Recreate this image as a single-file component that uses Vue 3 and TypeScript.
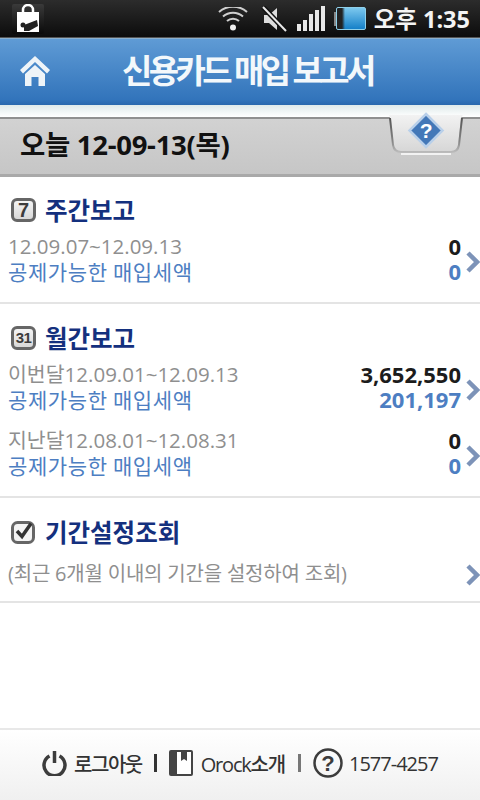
<script setup lang="ts">
interface Row { label: string; total: string; deductible: string }
const signal: number[] = [7, 11, 17, 21, 25]
const weekly: Row[] = [{ label: '12.09.07~12.09.13', total: '0', deductible: '0' }]
const monthly: Row[] = [
  { label: '이번달12.09.01~12.09.13', total: '3,652,550', deductible: '201,197' },
  { label: '지난달12.08.01~12.08.31', total: '0', deductible: '0' }
]
</script>

<template>
  <div class="screen">
    <div class="status">
      <svg class="notif" width="32" height="30" viewBox="0 0 32 30">
        <defs>
          <linearGradient id="tile" x1="0" y1="0" x2="0" y2="1">
            <stop offset="0" stop-color="#3a3a3a" />
            <stop offset="1" stop-color="#0a0a0a" />
          </linearGradient>
        </defs>
        <rect width="32" height="30" rx="2" fill="url(#tile)" />
        <path d="M11 8V6a5 5 0 0 1 10 0v2" fill="none" stroke="#fff" stroke-width="2.500" />
        <path d="M5 8h22v20H5z" fill="#fff" />
        <path d="M12 21l13-5 1 6-9 5h-5z" fill="#222" />
        <circle cx="11" cy="21" r="2.500" fill="#222" />
      </svg>
      <div class="status-right">
        <svg class="wifi" width="30" height="24" viewBox="0 0 30 24">
          <circle cx="15" cy="20.500" r="3" fill="#f0f0f0" />
          <path d="M9 14a9 9 0 0 1 12 0M5 9.500a15 15 0 0 1 20 0M1 5a21 21 0 0 1 28 0" fill="none" stroke="#cfcfcf" stroke-width="2" />
        </svg>
        <svg class="mute" width="26" height="26" viewBox="0 0 26 26">
          <path d="M3 9h5l8-7v22l-8-7H3z" fill="#ddd" />
          <path d="M2 1l23 24" stroke="#111" stroke-width="5" />
          <path d="M2 1l23 24" stroke="#e8e8e8" stroke-width="2" />
        </svg>
        <div class="bars">
          <i v-for="h in signal" :key="h" :style="{ height: h + 'px' }"></i>
        </div>
        <div class="battery"><span class="tip"></span><span class="cell"></span></div>
        <span class="clock">오후 1:35</span>
      </div>
    </div>

    <header class="titlebar">
      <svg class="home" width="32" height="32" viewBox="0 0 32 32">
        <path d="M16 1L1 15l3 3.500L16 7l12 11.500 3-3.500z" fill="#eef4f8" />
        <path d="M6 19L16 10l10 9v12h-6.500v-9h-7v9H6z" fill="#eef4f8" />
      </svg>
      <h1>신용카드 매입 보고서</h1>
    </header>

    <div class="gap"></div>

    <div class="datebar">
      <span>오늘 12-09-13(목)</span>
      <svg class="tab" width="78" height="42" viewBox="0 0 78 42">
        <defs>
          <linearGradient id="tabfill" x1="0" y1="0" x2="0" y2="1">
            <stop offset="0" stop-color="#f2f2f2" />
            <stop offset="1" stop-color="#d6d6d6" />
          </linearGradient>
          <linearGradient id="tabline" x1="0" y1="0" x2="0" y2="1">
            <stop offset="0" stop-color="#555" />
            <stop offset="0.7" stop-color="#888" />
            <stop offset="1" stop-color="#bbb" />
          </linearGradient>
        </defs>
        <path d="M2 0h74l-2 3-3 27q-1 7-8 7H13q-7 0-8-7L3 3z" fill="url(#tabfill)" />
        <path d="M3 3l3 27q1 7 8 7h50q7 0 8-7l3-27" fill="none" stroke="url(#tabline)" stroke-width="2" />
        <path d="M14 39h50" stroke="#fff" stroke-width="1.500" />
        <path d="M39 -3l16.500 16.500L39 30 22.500 13.500z" transform="translate(0 2)" fill="#4378b8" stroke="#b9d0ea" stroke-width="2.500" />
        <text x="39" y="23" text-anchor="middle" class="q">?</text>
      </svg>
    </div>

    <main class="content">
      <section class="block weekly">
        <h2>
          <span class="cal">7</span>
          주간보고
        </h2>
        <div v-for="r in weekly" :key="r.label" class="row">
          <div class="texts">
            <div class="range">{{ r.label }}</div>
            <div class="ded">공제가능한 매입세액</div>
          </div>
          <div class="nums">
            <div class="total">{{ r.total }}</div>
            <div class="dval">{{ r.deductible }}</div>
          </div>
          <svg class="chev" width="14" height="22" viewBox="0 0 14 22"><path d="M2 2l9 9-9 9" fill="none" stroke="#7d93b8" stroke-width="4.500" /></svg>
        </div>
      </section>

      <section class="block monthly">
        <h2>
          <span class="cal two">31</span>
          월간보고
        </h2>
        <div v-for="r in monthly" :key="r.label" class="row">
          <div class="texts">
            <div class="range">{{ r.label }}</div>
            <div class="ded">공제가능한 매입세액</div>
          </div>
          <div class="nums">
            <div class="total">{{ r.total }}</div>
            <div class="dval">{{ r.deductible }}</div>
          </div>
          <svg class="chev" width="14" height="22" viewBox="0 0 14 22"><path d="M2 2l9 9-9 9" fill="none" stroke="#7d93b8" stroke-width="4.500" /></svg>
        </div>
      </section>

      <section class="block period">
        <h2>
          <svg class="check" width="25" height="24" viewBox="0 0 25 24">
            <rect x="1.500" y="2.500" width="21" height="20" rx="5" fill="#f4f4f4" stroke="#666" stroke-width="3" />
            <path d="M6 11l5 5.500 9-13" fill="none" stroke="#333" stroke-width="3.500" />
          </svg>
          기간설정조회
        </h2>
        <div class="row note-row">
          <div class="note">(최근 6개월 이내의 기간을 설정하여 조회)</div>
          <svg class="chev" width="14" height="22" viewBox="0 0 14 22"><path d="M2 2l9 9-9 9" fill="none" stroke="#7d93b8" stroke-width="4.500" /></svg>
        </div>
      </section>
    </main>

    <footer class="foot">
      <svg width="25" height="26" viewBox="0 0 25 26">
        <path d="M7.500 6a10.500 10.500 0 1 0 10 0" fill="none" stroke="#3c3c3c" stroke-width="3.500" />
        <path d="M12.500 1v12" stroke="#3c3c3c" stroke-width="3.500" />
      </svg>
      <span class="ft ko">로그아웃</span>
      <i class="sep"></i>
      <svg class="book" width="24" height="26" viewBox="0 0 24 26">
        <rect x="0" y="0" width="24" height="26" rx="2" fill="#444" />
        <path d="M8 2h14v22H8z" fill="#fff" />
        <path d="M12 2h6v9l-3-2-3 2z" fill="#444" />
      </svg>
      <span class="ft mix">Orock소개</span>
      <i class="sep light"></i>
      <svg width="30" height="30" viewBox="0 0 30 30">
        <circle cx="15" cy="15" r="13.500" fill="none" stroke="#3c3c3c" stroke-width="2.500" />
        <text x="15" y="22.500" text-anchor="middle" class="fq">?</text>
      </svg>
      <span class="ft num">1577-4257</span>
    </footer>
  </div>
</template>

<style>
html, body { margin: 0; padding: 0; background: #fff; }
</style>

<style scoped>
.screen {
  width: 480px;
  height: 800px;
  display: flex;
  flex-direction: column;
  overflow: hidden;
  background: #fff;
  font-family: "Open Sans", "Noto Sans CJK KR", sans-serif;
}
.status {
  height: 37px;
  flex: none;
  display: flex;
  align-items: center;
  justify-content: space-between;
  padding: 0 10px 0 12px;
  background: linear-gradient(#2c2c2c, #0c0c0c);
  border-bottom: 1px solid #555;
}
.status-right { display: flex; align-items: center; }
.wifi { margin-right: 13px; }
.mute { margin-right: 10px; }
.bars { display: flex; align-items: flex-end; gap: 2.500px; height: 25px; margin-right: 9px; }
.bars i { width: 3.500px; background: #e8e8e8; display: block; }
.battery { display: flex; align-items: center; margin-right: 8px; }
.tip { width: 2px; height: 14px; background: #888; }
.cell {
  width: 30px;
  height: 23px;
  box-sizing: border-box;
  border-radius: 2px;
  border: 1px solid #8fd0ea;
  background-image: linear-gradient(90deg, #222 0, #222 5px, transparent 8px), linear-gradient(#7cc8ee, #1580c8);
}
.clock { color: #f4f4f4; font-size: 23.500px; font-weight: 700; line-height: 30px; }
.titlebar {
  height: 67px;
  flex: none;
  position: relative;
  display: flex;
  align-items: center;
  justify-content: center;
  padding: 0 0 2px 15px;
  background: linear-gradient(#5f9bd5, #3274bb 92%, #2a68ad);
  border-top: 1px solid #8ab0cf;
  box-sizing: border-box;
}
.home { position: absolute; left: 19px; top: 16px; }
h1 {
  margin: 0;
  color: #f3f8fb;
  font-size: 33px;
  font-weight: 700;
  letter-spacing: -3.600px;
  line-height: 40px;
}
.gap { height: 12px; flex: none; background: linear-gradient(#dfeaea, #fff); }
.datebar {
  height: 60px;
  flex: none;
  position: relative;
  display: flex;
  align-items: center;
  padding: 0 0 7px 20px;
  box-sizing: border-box;
  background: linear-gradient(#d2d2d2, #c6c6c6);
  border-top: 2px solid #8f8f8f;
  border-bottom: 3px solid #a9a9a9;
  color: #111;
  font-size: 27.500px;
  font-weight: 700;
  letter-spacing: -0.300px;
}
.tab { position: absolute; left: 387px; top: -4px; overflow: visible; }
.q { fill: #fff; font-size: 21px; font-weight: 700; font-family: "Liberation Sans", sans-serif; }
.content { flex: 1; min-height: 0; display: flex; flex-direction: column; }
.block { border-bottom: 2px solid #e4e4e4; box-sizing: border-box; padding-left: 8px; }
.weekly { height: 127px; padding-top: 17px; }
.monthly { height: 194px; padding-top: 18px; }
.period { height: 105px; padding-top: 18px; }
h2 {
  margin: 0 0 0 3px;
  height: 32px;
  display: flex;
  align-items: center;
  gap: 9px;
  color: #14307e;
  font-family: "Noto Sans CJK KR", sans-serif;
  font-size: 24.500px;
  font-weight: 700;
  line-height: 32px;
}
.cal {
  width: 25px;
  height: 24px;
  flex: none;
  box-sizing: border-box;
  border: 3px solid #666;
  border-radius: 6px;
  display: flex;
  align-items: center;
  justify-content: center;
  font-family: "Liberation Sans", sans-serif;
  font-size: 20px;
  color: #3c3c3c;
  background: linear-gradient(#f4f4f4, #d8d8d8);
  font-weight: 700;
}
.cal.two { font-size: 15px; letter-spacing: -0.500px; }
.check { flex: none; }
.row { display: flex; align-items: center; height: 66px; }
.texts { flex: 1; }
.range { color: #8f8f8f; font-size: 20.500px; line-height: 25px; }
.ded { color: #4d7ec2; font-family: "Noto Sans CJK KR", sans-serif; font-size: 21px; line-height: 25px; letter-spacing: 0.600px; }
.nums { text-align: right; font-weight: 700; font-size: 22px; line-height: 25px; }
.total { color: #1c1c1c; }
.dval { color: #4d7ec2; }
.chev { margin: 6px 0 0 5px; flex: none; }
.note-row { height: 48px; }
.note { flex: 1; color: #8f8f8f; font-size: 20px; letter-spacing: -0.200px; }
.foot {
  height: 72px;
  flex: none;
  display: flex;
  align-items: center;
  justify-content: center;
  padding-bottom: 4px;
  box-sizing: border-box;
  border-top: 2px solid #e8e8e8;
  background: linear-gradient(#fff, #f0f0f0);
  color: #333;
}
.ft { font-size: 20px; font-weight: 500; margin-left: 7px; }
.ko { letter-spacing: -1.500px; }
.mix { letter-spacing: -1.200px; margin-left: 8px; }
.num { letter-spacing: -1px; margin-left: 6px; }
.sep { width: 3px; height: 18px; background: #333; margin: 0 12px 0 12px; display: block; }
.sep.light { background: #777; margin: 0 12px 0 13px; }
.fq { fill: #3c3c3c; font-size: 22px; font-weight: 700; font-family: "Liberation Sans", sans-serif; }
</style>
